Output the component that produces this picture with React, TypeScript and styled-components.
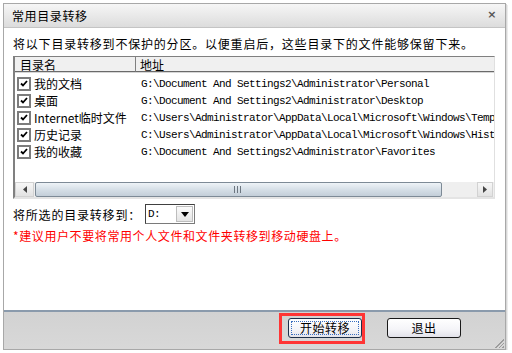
import styled, { createGlobalStyle } from "styled-components";

const GlobalStyle = createGlobalStyle`
  body {
    margin: 0;
    background: #ffffff;
    font-family: "Noto Sans CJK SC", "Liberation Sans", sans-serif;
    font-size: 12px;
    color: #000;
  }
`;

const Window = styled.div`
  width: 501px;
  height: 345px;
  margin: 3px 0 0 3px;
  border: 1px solid #a8a8a8;
  display: flex;
  flex-direction: column;
  box-shadow: 1px 1px 0 #d8d8d8, 2px 2px 0 #ececec;
  background: #fff;
`;

const TitleBar = styled.div`
  height: 23px;
  flex: none;
  display: flex;
  align-items: center;
  justify-content: space-between;
  padding: 0 8px 0 8px;
  background: linear-gradient(#f6f6f6, #dcdcdc);
  border-bottom: 1px solid #c4c4c4;
  font-size: 12px;
  letter-spacing: 0.6px;
  line-height: 1;
`;

const Close = styled.span`
  font-family: "DejaVu Sans", sans-serif;
  font-size: 11px;
  font-weight: bold;
  color: #555;
  margin-top: -2px;
`;

const Body = styled.div`
  flex: 1;
  padding: 9px 10px 0 9px;
  display: flex;
  flex-direction: column;
  border-bottom: 2px solid #8a9aac;
`;

const Intro = styled.div`
  line-height: 14px;
  letter-spacing: 0.8px;
  white-space: nowrap;
  margin-bottom: 5px;
`;

const ListBox = styled.div`
  height: 140px;
  border: 1px solid #a0a0a0;
  border-top-color: #808080;
  border-left: 2px solid #808080;
  border-right-color: #e0e0e0;
  border-bottom: 2px solid #e4e4e4;
  display: flex;
  flex-direction: column;
  overflow: hidden;
`;

const Header = styled.div`
  display: grid;
  grid-template-columns: 120px 1fr;
  height: 15px;
  background: #f0f0f0;
  border-bottom: 1px solid #d6d6d6;
`;

const HeadCell = styled.div<{ $first?: boolean }>`
  padding-left: ${(p) => (p.$first ? "5px" : "4px")};
  line-height: 15px;
  border-left: ${(p) => (p.$first ? "none" : "1px solid #808080")};
  border-bottom: 1px solid #6a6a6a;
  height: 14px;
  overflow: hidden;
`;

const Rows = styled.div`
  flex: 1;
  padding-top: 2px;
`;

const Row = styled.div`
  display: grid;
  grid-template-columns: 126px 1fr;
  height: 17px;
  align-items: center;
  white-space: nowrap;
`;

const NameCell = styled.div`
  display: flex;
  align-items: center;
  gap: 3px;
  padding-left: 2px;
`;

const Check = styled.span`
  width: 10px;
  height: 10px;
  border: 2px solid #7c7c7c;
  background: #fff;
  display: inline-flex;
  align-items: center;
  justify-content: center;
  flex: none;
`;

const Path = styled.div`
  font-family: "Liberation Mono", monospace;
  font-size: 11px;
  letter-spacing: -0.6px;
  overflow: hidden;
`;

const HScroll = styled.div`
  height: 15px;
  display: flex;
  align-items: stretch;
  background: #efefef;
  padding: 0 1px 0 0;
  gap: 1px;
`;

const ArrowBtn = styled.div<{ $w: number }>`
  width: ${(p) => p.$w}px;
  background: linear-gradient(#f7f7f7, #e2e2e2);
  border: 1px solid #d2d2d2;
  display: flex;
  align-items: center;
  justify-content: center;
  box-sizing: border-box;
`;

const Thumb = styled.div`
  width: 407px;
  border: 1px solid #7d8a96;
  border-radius: 2px;
  box-sizing: border-box;
  background: linear-gradient(#eef3f7, #d6dfe7 50%, #c3ced8);
  display: flex;
  align-items: center;
  justify-content: flex-end;
  padding-right: 200px;
`;

const Grip = styled.span`
  width: 7px;
  height: 7px;
  background: repeating-linear-gradient(90deg, #6c7680 0 1px, transparent 1px 3px);
`;

const Track = styled.div`
  flex: 1;
`;

const TargetRow = styled.div`
  display: flex;
  align-items: center;
  margin-top: 5px;
  height: 20px;
  letter-spacing: 0.8px;
`;

const Select = styled.div`
  width: 48px;
  height: 18px;
  border: 1px solid #7a7a7a;
  border-top-color: #404040;
  border-left-color: #404040;
  margin-left: 4px;
  display: flex;
  align-items: stretch;
  background: #fff;
  letter-spacing: 0;
`;

const SelectValue = styled.span`
  flex: 1;
  font-family: "Liberation Mono", monospace;
  font-size: 11px;
  letter-spacing: -0.6px;
  line-height: 18px;
  padding-left: 2px;
`;

const SelectBtn = styled.span`
  width: 15px;
  margin: 1px;
  background: linear-gradient(#fbfbfb, #e4e4e4);
  border: 1px solid #bdbdbd;
  display: flex;
  align-items: center;
  justify-content: center;
`;

const Warning = styled.div`
  color: #ff0000;
  margin-top: 5px;
  line-height: 14px;
  letter-spacing: 0.6px;
`;

const Footer = styled.div`
  height: 36px;
  flex: none;
  background: linear-gradient(#d2d2d2, #d8d8d8);
  display: flex;
  align-items: flex-start;
  justify-content: flex-end;
  padding: 1px 44px 0 0;
  gap: 22px;
  position: relative;
`;

const Highlight = styled.div`
  border: 3px solid #ff3535;
  padding: 2px 0 3px 6px;
`;

const Button = styled.button<{ $focused?: boolean }>`
  width: 74px;
  height: 20px;
  border: 1px solid ${(p) => (p.$focused ? "#1c2f4a" : "#1a1a1a")};
  border-radius: 3px;
  background: linear-gradient(#ffffff, #f4f4f8 60%, #e2e2ea);
  font-family: "Noto Sans CJK SC", sans-serif;
  font-size: 12px;
  letter-spacing: 0.5px;
  line-height: 1;
  padding: 0;
  color: #000;
  outline: ${(p) => (p.$focused ? "1px dotted #3a6fc0" : "none")};
  outline-offset: -4px;
`;

const PlainBtnWrap = styled.div`
  padding-top: 5px;
`;

const Grip2 = styled.div`
  position: absolute;
  right: 1px;
  bottom: 1px;
  width: 10px;
  height: 10px;
  background: linear-gradient(135deg, transparent 55%, #9c9c9c 55% 62%, transparent 62% 72%, #9c9c9c 72% 79%, transparent 79% 88%, #9c9c9c 88%);
`;

const items = [
  { name: "我的文档", path: "G:\\Document And Settings2\\Administrator\\Personal" },
  { name: "桌面", path: "G:\\Document And Settings2\\Administrator\\Desktop" },
  { name: "Internet临时文件", path: "C:\\Users\\Administrator\\AppData\\Local\\Microsoft\\Windows\\Temp" },
  { name: "历史记录", path: "C:\\Users\\Administrator\\AppData\\Local\\Microsoft\\Windows\\Hist" },
  { name: "我的收藏", path: "G:\\Document And Settings2\\Administrator\\Favorites" },
];

function Tick() {
  return (
    <svg width="8" height="7" viewBox="0 0 8 7">
      <path d="M1 3.5 L3 5.5 L7 1" stroke="#000" strokeWidth="1.8" fill="none" />
    </svg>
  );
}

export default function App() {
  return (
    <>
      <GlobalStyle />
      <Window>
        <TitleBar>
          <span>常用目录转移</span>
          <Close>×</Close>
        </TitleBar>
        <Body>
          <Intro>将以下目录转移到不保护的分区。以便重启后，这些目录下的文件能够保留下来。</Intro>
          <ListBox>
            <Header>
              <HeadCell $first>目录名</HeadCell>
              <HeadCell>地址</HeadCell>
            </Header>
            <Rows>
              {items.map((it, i) => (
                <Row key={i}>
                  <NameCell>
                    <Check>
                      <Tick />
                    </Check>
                    <span>{it.name}</span>
                  </NameCell>
                  <Path>{it.path}</Path>
                </Row>
              ))}
            </Rows>
            <HScroll>
              <ArrowBtn $w={19}>
                <svg width="4" height="7" viewBox="0 0 4 7">
                  <path d="M4 0 L0 3.5 L4 7 Z" fill="#444" />
                </svg>
              </ArrowBtn>
              <Thumb>
                <Grip />
              </Thumb>
              <Track />
              <ArrowBtn $w={16}>
                <svg width="4" height="7" viewBox="0 0 4 7">
                  <path d="M0 0 L4 3.5 L0 7 Z" fill="#444" />
                </svg>
              </ArrowBtn>
            </HScroll>
          </ListBox>
          <TargetRow>
            <span>将所选的目录转移到：</span>
            <Select>
              <SelectValue>D:</SelectValue>
              <SelectBtn>
                <svg width="8" height="5" viewBox="0 0 8 5">
                  <path d="M0 0 L8 0 L4 5 Z" fill="#000" />
                </svg>
              </SelectBtn>
            </Select>
          </TargetRow>
          <Warning>*建议用户不要将常用个人文件和文件夹转移到移动硬盘上。</Warning>
        </Body>
        <Footer>
          <Highlight>
            <Button $focused>开始转移</Button>
          </Highlight>
          <PlainBtnWrap>
            <Button>退出</Button>
          </PlainBtnWrap>
          <Grip2 />
        </Footer>
      </Window>
    </>
  );
}
